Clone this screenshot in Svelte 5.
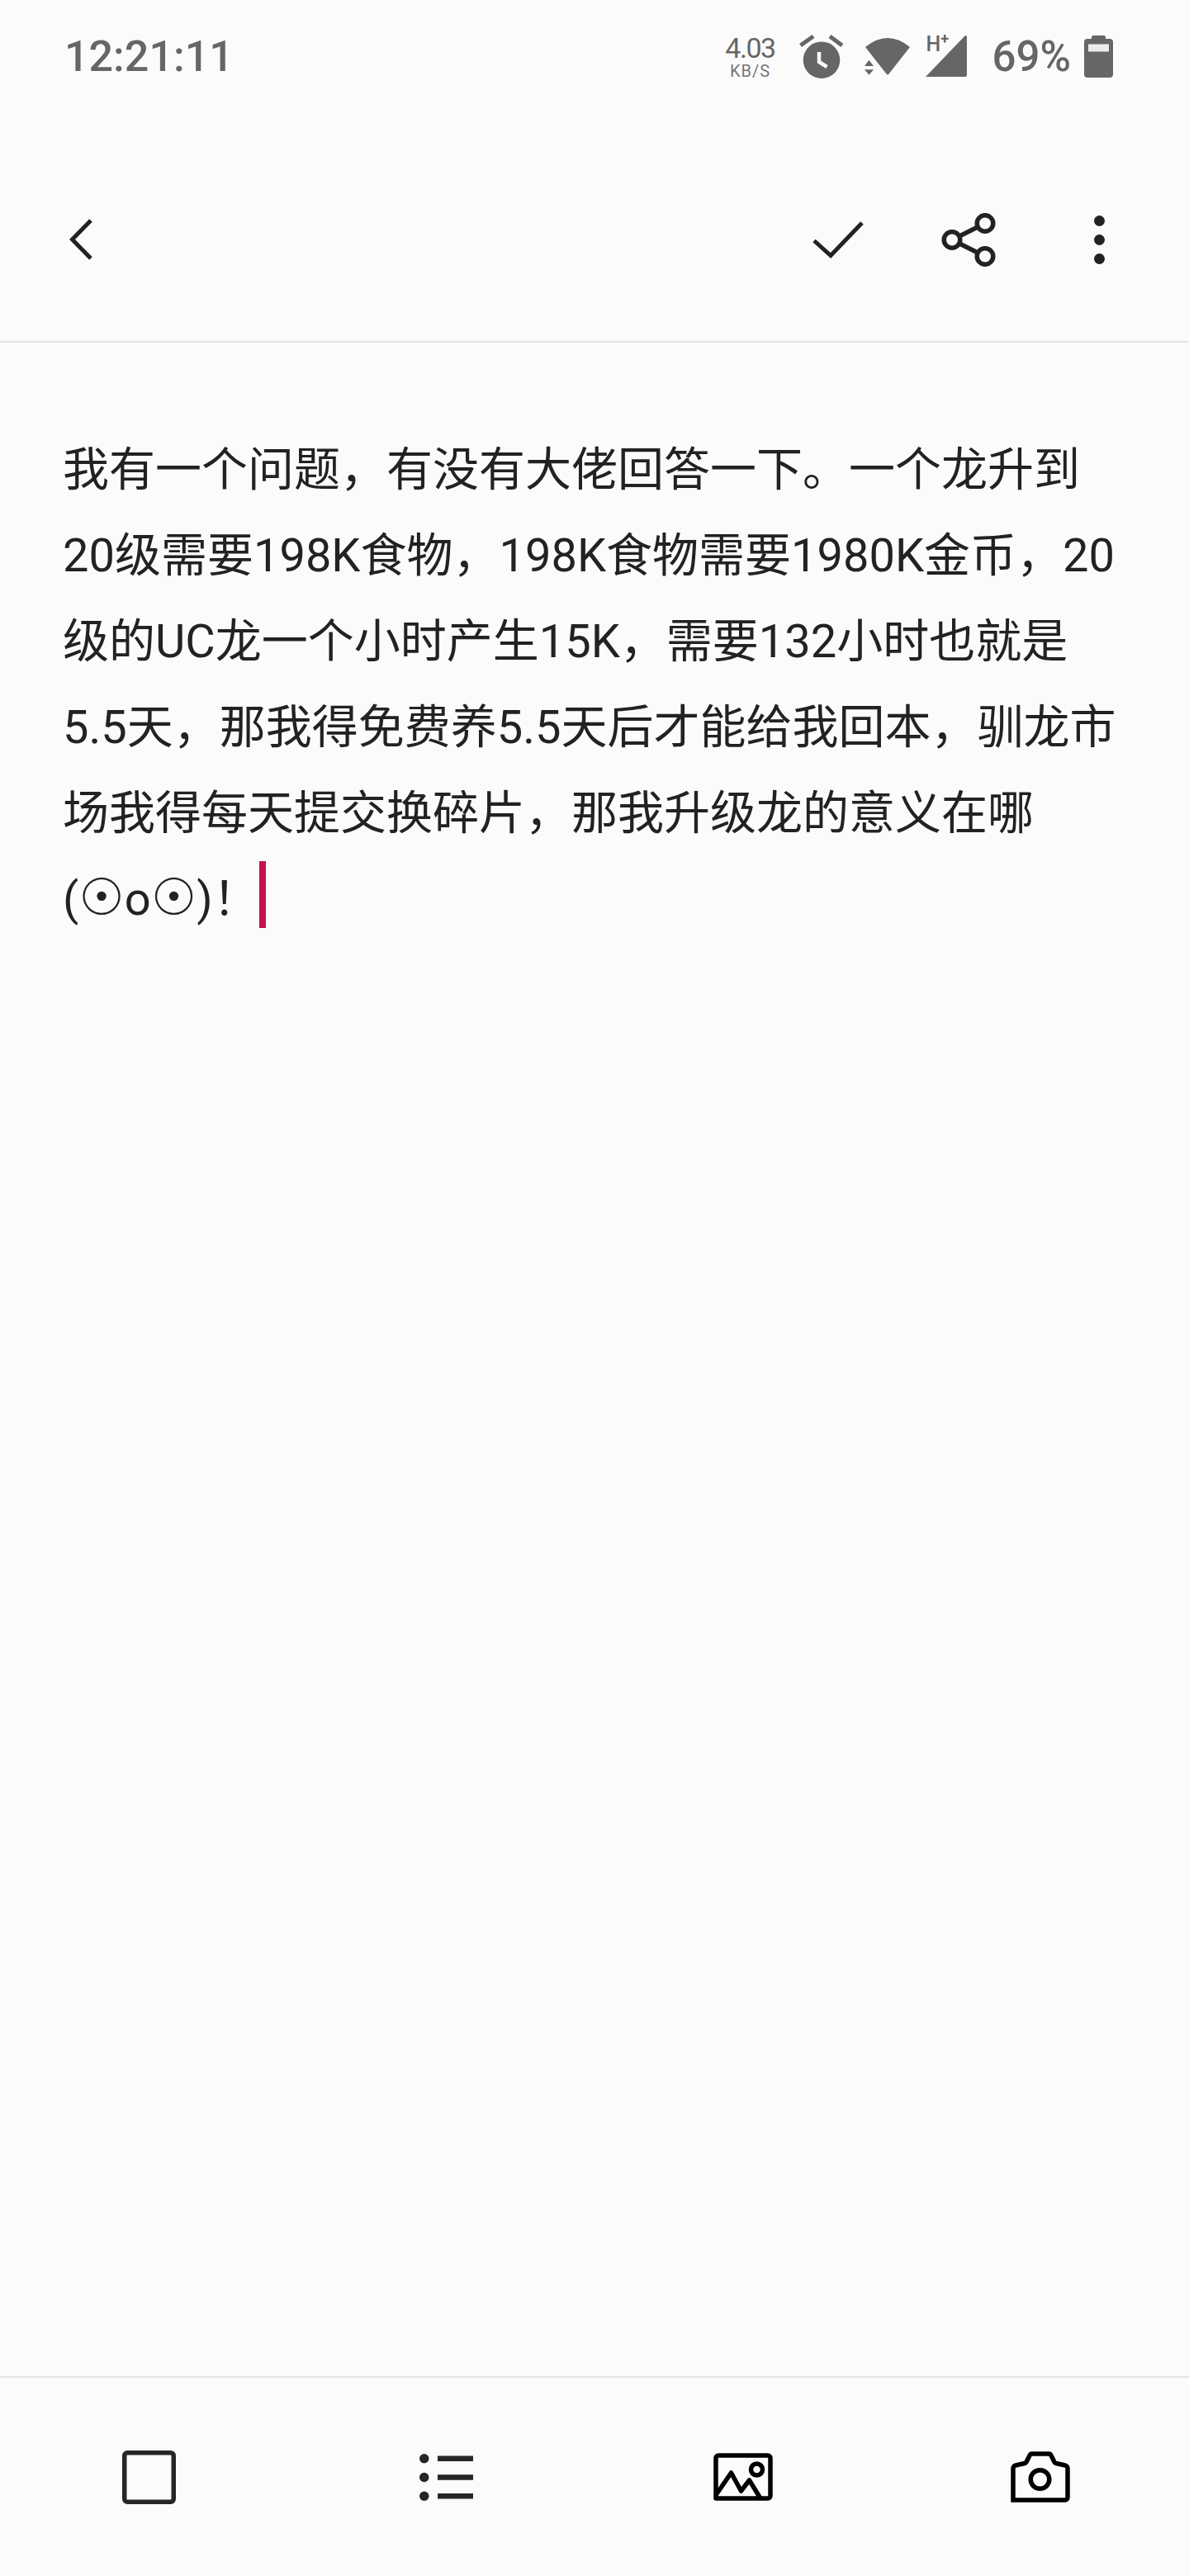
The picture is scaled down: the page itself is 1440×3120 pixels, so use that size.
<script>
  const lines = [
    '我有一个问题，有没有大佬回答一下。一个龙升到',
    '20级需要198K食物，198K食物需要1980K金币，20',
    '级的UC龙一个小时产生15K，需要132小时也就是',
    '5.5天，那我得免费养5.5天后才能给我回本，驯龙市',
    '场我得每天提交换碎片，那我升级龙的意义在哪'
  ];
</script>

<div class="page">
  <div class="status">
    <span class="clock">12:21:11</span>
    <div class="status-right">
      <div class="speed"><span class="speed-num">4.03</span><span class="speed-unit">KB/S</span></div>
      <svg class="alarm" width="53" height="53" viewBox="0 0 53 53" fill="#666">
        <circle cx="27" cy="30.7" r="22.3" />
        <path d="M24 21v12l9.5 6" fill="none" stroke="#fbfbfb" stroke-width="4.5" />
        <path d="M1.5 13 17 2M52 13 37 2" fill="none" stroke="#666" stroke-width="5" />
      </svg>
      <svg class="wifi" width="56" height="45" viewBox="0 0 56 45" fill="#666">
        <path d="M1 11Q28-11 55 11L29.5 43.5a2 2 0 0 1-3 0z" />
        <path d="M5.5 26.7 11 34H0zM0 38.3h11L5.5 44.7z" />
      </svg>
      <div class="signal">
        <svg width="50" height="50" viewBox="0 0 50 50" fill="#666">
          <path d="M48 0a2 2 0 0 1 2 2v46a2 2 0 0 1-2 2H0z" />
        </svg>
        <span class="hplus">H<span class="plus">+</span></span>
      </div>
      <span class="pct">69%</span>
      <svg class="battery" width="35" height="51" viewBox="0 0 35 51">
        <path d="M9 2a2 2 0 0 1 2-2h13a2 2 0 0 1 2 2v2h5a4 4 0 0 1 4 4v39a4 4 0 0 1-4 4H4a4 4 0 0 1-4-4V8a4 4 0 0 1 4-4h5z" fill="#666" />
        <rect x="5" y="10.5" width="25" height="9" fill="#ececec" />
      </svg>
    </div>
  </div>

  <div class="toolbar">
    <button class="icon back" aria-label="Back">
      <svg width="28" height="50" viewBox="0 0 28 50" fill="none" stroke="#222" stroke-width="5">
        <path d="M26 2 3.5 25 26 48" />
      </svg>
    </button>
    <div class="actions">
      <button class="icon" aria-label="Done">
        <svg width="62" height="45" viewBox="0 0 62 45" fill="none" stroke="#222" stroke-width="5">
          <path d="M2 23.5 22 41.5 60 2" />
        </svg>
      </button>
      <button class="icon" aria-label="Share">
        <svg width="66" height="65" viewBox="0 0 66 65" fill="none" stroke="#222" stroke-width="5.5">
          <circle cx="53" cy="12.5" r="9.8" />
          <circle cx="13" cy="32.5" r="9.8" />
          <circle cx="53" cy="52.5" r="9.8" />
          <path d="M22 28 44 17M22 37l22 11" />
        </svg>
      </button>
      <button class="icon" aria-label="More">
        <svg width="13" height="59" viewBox="0 0 13 59" fill="#222">
          <circle cx="6.5" cy="6.5" r="6.5" />
          <circle cx="6.5" cy="29.5" r="6.5" />
          <circle cx="6.5" cy="52.5" r="6.5" />
        </svg>
      </button>
    </div>
  </div>

  <div class="note">
    {#each lines as line}
      <div class="line">{line}</div>
    {/each}
    <div class="line">(<span class="sun">☉</span>o<span class="sun">☉</span>)！<span class="caret"></span></div>
  </div>

  <div class="bottom">
    <button class="icon" aria-label="Checkbox">
      <svg width="65" height="65" viewBox="0 0 65 65" fill="none" stroke="#262626" stroke-width="5.5">
        <rect x="2.75" y="2.75" width="59.5" height="59.5" rx="3.5" />
      </svg>
    </button>
    <button class="icon" aria-label="List">
      <svg width="65" height="57" viewBox="0 0 65 57" fill="#262626">
        <circle cx="5.75" cy="5.75" r="5.75" />
        <circle cx="5.75" cy="28.5" r="5.75" />
        <circle cx="5.75" cy="51.25" r="5.75" />
        <path d="M22 2.5h43V9H22zM22 25.25h43v6.5H22zM22 48h43v6.5H22z" />
      </svg>
    </button>
    <button class="icon" aria-label="Image">
      <svg width="72" height="58" viewBox="0 0 72 58" fill="none" stroke="#000" stroke-width="5.5" stroke-linejoin="round">
        <path d="M3 55V6a3 3 0 0 1 3-3h60a3 3 0 0 1 3 3v46a3 3 0 0 1-3 3z" />
        <path d="M3 51 21.5 24l12 22 10-13L57 55" />
        <circle cx="52.5" cy="20" r="7" />
      </svg>
    </button>
    <button class="icon" aria-label="Camera">
      <svg width="72" height="62" viewBox="0 0 72 62" fill="none" stroke="#000" stroke-width="5.5">
        <path d="M3 59V20.5a3.5 3.5 0 0 1 3-3.5l11-2.5a3 3 0 0 0 2.2-1.8L23 5a3 3 0 0 1 3-2h20a3 3 0 0 1 3 2l3.8 7.7a3 3 0 0 0 2.2 1.8l11 2.5a3.5 3.5 0 0 1 3 3.5V56a3 3 0 0 1-3 3z" />
        <circle cx="35.5" cy="34" r="11.3" />
      </svg>
    </button>
  </div>
</div>

<style>
  :global(body) {
    margin: 0;
    background: #fbfbfb;
  }

  .page {
    height: 3120px;
    display: flex;
    flex-direction: column;
    background: #fbfbfb;
    font-family: Roboto, "Noto Sans CJK SC", sans-serif;
  }

  .status {
    height: 136px;
    flex: none;
    box-sizing: border-box;
    padding: 0 92px 0 78px;
    display: flex;
    align-items: center;
    justify-content: space-between;
    color: #666;
  }

  .clock {
    font-size: 52px;
    font-weight: 500;
  }

  .status-right {
    display: flex;
    align-items: center;
  }

  .speed {
    width: 58px;
    display: flex;
    flex-direction: column;
    align-items: center;
    line-height: 1;
    margin-right: 31px;
  }

  .speed-num {
    font-size: 34px;
    letter-spacing: -1.5px;
  }

  .speed-unit {
    font-size: 20px;
    letter-spacing: 1px;
    margin-top: 1px;
    white-space: nowrap;
    color: #777;
  }

  .alarm {
    margin-right: 26px;
  }

  .wifi {
    margin-right: 18px;
  }

  .signal {
    position: relative;
    width: 50px;
    height: 50px;
    margin-right: 30px;
  }

  .signal svg {
    display: block;
  }

  .hplus {
    position: absolute;
    left: 0;
    top: 2px;
    font-size: 25px;
    font-weight: 500;
    line-height: 18px;
  }

  .plus {
    position: relative;
    top: -9px;
    font-size: 18px;
    font-weight: 700;
  }

  .pct {
    font-size: 51px;
    font-weight: 500;
    margin-right: 16px;
  }

  .toolbar {
    height: 279px;
    flex: none;
    box-sizing: border-box;
    padding: 31px 30px 0 84px;
    display: flex;
    align-items: center;
    justify-content: space-between;
    border-bottom: 2px solid #e5e5e5;
  }

  .actions {
    display: flex;
    align-items: center;
  }

  .actions .icon {
    width: 158px;
    justify-content: center;
  }

  .icon {
    border: none;
    background: none;
    padding: 0;
    display: flex;
  }

  .note {
    flex: 1;
    padding: 102px 76px 0;
    font-size: 56px;
    line-height: 104px;
    color: #222;
    white-space: nowrap;
  }

  .sun {
    font-family: "DejaVu Sans", sans-serif;
    font-size: 62px;
    line-height: 1;
  }

  .caret {
    display: inline-block;
    width: 8px;
    height: 81px;
    margin-bottom: 20px;
    background: #c2144a;
    vertical-align: middle;
  }

  .bottom {
    height: 242px;
    flex: none;
    box-sizing: border-box;
    border-top: 2px solid #e5e5e5;
    display: grid;
    grid-template-columns: repeat(4, 360px);
    align-items: center;
    justify-items: center;
  }
</style>
